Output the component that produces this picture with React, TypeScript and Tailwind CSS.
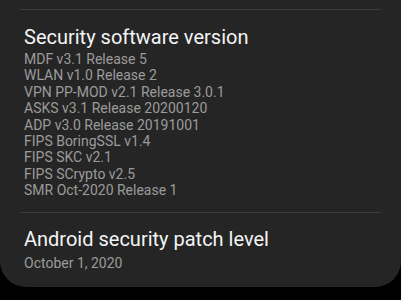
import React from 'react';

const versions = [
  'MDF v3.1 Release 5',
  'WLAN v1.0 Release 2',
  'VPN PP-MOD v2.1 Release 3.0.1',
  'ASKS v3.1 Release 20200120',
  'ADP v3.0 Release 20191001',
  'FIPS BoringSSL v1.4',
  'FIPS SKC v2.1',
  'FIPS SCrypto v2.5',
  'SMR Oct-2020 Release 1',
];

const App = () => {
  return (
    <div className="w-[401px] h-[300px] bg-black overflow-hidden font-['Roboto',sans-serif]">
      <div className="bg-[#252525] rounded-b-[26px] pt-[9px] pb-[15px]">
        {/* divider */}
        <div className="mx-[20px] h-px bg-[#3c3c3c]" />

        <div className="px-[24px] pt-[14px] pb-[13px]">
          <h2 className="text-[20px] leading-[26px] mb-[1px] text-[#f4f4f4]">Security software version</h2>
          <div className="text-[14px] leading-[16.4px] text-[#9b9b9b]">
            {versions.map((v, i) => (
              <p key={i}>{v}</p>
            ))}
          </div>
        </div>

        <div className="mx-[20px] h-px bg-[#3c3c3c]" />

        <div className="px-[24px] pt-[13px]">
          <h2 className="text-[20px] leading-[26px] text-[#f4f4f4]">Android security patch level</h2>
          <p className="text-[14px] leading-[18px] mt-[2px] text-[#9b9b9b]">October 1, 2020</p>
        </div>
      </div>
    </div>
  );
};

export default App;
